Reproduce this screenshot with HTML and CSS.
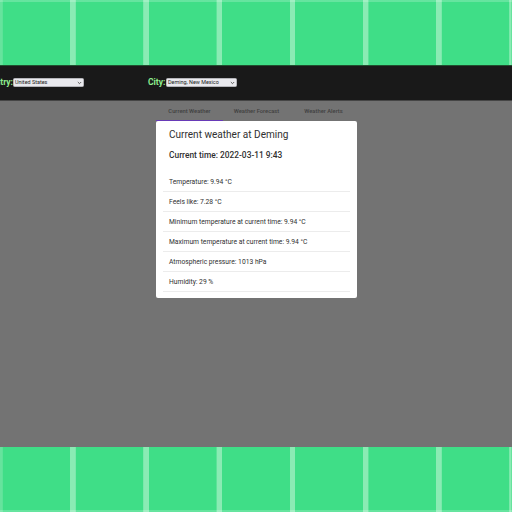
FILE: index.html
```html
<!DOCTYPE html>
<html lang="en">
<head>
<meta charset="utf-8">
<title>Weather</title>
<link rel="stylesheet" href="styles.css">
</head>
<body>
<div class="tiles tiles-top"></div>
<header class="bar">
  <div class="field country"><span class="label"><span class="fit">Country:</span></span><div class="select"><span>United States</span><svg viewBox="0 0 6 4"><path d="M1 .8 3 2.8 5 .8"/></svg></div></div>
  <div class="field city"><span class="label">City:</span><div class="select"><span>Deming, New Mexico</span><svg viewBox="0 0 6 4"><path d="M1 .8 3 2.8 5 .8"/></svg></div></div>
</header>
<main class="content">
  <nav class="tabs">
    <div class="tab active">Current Weather</div>
    <div class="tab">Weather Forecast</div>
    <div class="tab">Weather Alerts</div>
  </nav>
  <section class="card">
    <h1>Current weather at Deming</h1>
    <h2>Current time: 2022-03-11 9:43</h2>
    <ul>
      <li>Temperature: 9.94 °C</li>
      <li>Feels like: 7.28 °C</li>
      <li>Minimum temperature at current time: 9.94 °C</li>
      <li>Maximum temperature at current time: 9.94 °C</li>
      <li>Atmospheric pressure: 1013 hPa</li>
      <li>Humidity: 29 %</li>
    </ul>
  </section>
</main>
<div class="tiles tiles-bottom"></div>
</body>
</html>
```
FILE: styles.css
```css
* { box-sizing: border-box; }
body {
  margin: 0;
  width: 512px;
  height: 512px;
  overflow: hidden;
  display: flex;
  flex-direction: column;
  font-family: Roboto, sans-serif;
}
.tiles {
  --edges: linear-gradient(90deg, #66e39d 2px, transparent 2px, transparent 511px, #66e39d 511px);
  --columns: repeating-linear-gradient(90deg, #8aebb4 0, #8aebb4 2.2px, #3fde87 2.7px, #3fde87 69.9px, #8aebb4 70.4px, #8aebb4 73.2px);
  flex: none;
  height: 65px;
}
.tiles-top {
  background: linear-gradient(rgba(255, 255, 255, .2) 2px, transparent 2px), var(--edges), var(--columns);
}
.tiles-bottom {
  background: linear-gradient(0deg, rgba(255, 255, 255, .2) 2px, transparent 2px), var(--edges), var(--columns);
}
.bar {
  flex: none;
  height: 36px;
  display: flex;
  background: #191919;
  border-top: 1px solid #20502f;
  border-bottom: 1px solid #454545;
}
.field {
  display: flex;
  align-items: center;
  height: 33px;
}
.country { width: 148px; }
.label {
  flex: none;
  font-size: 8.5px;
  font-weight: 700;
  line-height: 10px;
  margin-top: -1px;
  color: #90ee90;
  width: 18px;
}
.country .label {
  width: 13px;
  display: flex;
  justify-content: flex-end;
}
.fit { flex: none; }
.select {
  width: 71px;
  height: 9px;
  display: flex;
  align-items: center;
  justify-content: space-between;
  padding: 0 1.5px 0 1px;
  background: #e9e9ed;
  border: 1px solid #b5b5ba;
  border-radius: 1.5px;
  font-size: 5.45px;
  line-height: 7px;
  color: #222;
}
.select svg {
  width: 5px;
  height: 4px;
  fill: none;
  stroke: #333;
  stroke-width: .9;
}
.content {
  flex: 1;
  background: #737373;
}
.tabs {
  width: 201px;
  height: 20px;
  margin-left: 156px;
  display: flex;
}
.tab {
  width: 67px;
  text-align: center;
  font-size: 5.8px;
  font-weight: 500;
  line-height: 20px;
  color: #414141;
}
.active { border-bottom: 1px solid #673ab7; }
.card {
  width: 201px;
  height: 177px;
  margin-left: 156px;
  padding: 7px 7px 0 7px;
  background: #fff;
  border-radius: 2px;
  color: #303030;
}
h1, h2 { margin: 0 0 0 6px; white-space: nowrap; }
h1 { font-size: 10.05px; line-height: 14px; font-weight: 400; }
h2 { font-size: 8.4px; line-height: 12px; font-weight: 500; margin-top: 7px; }
ul { margin: 11px 0 0; padding: 0; list-style: none; }
li {
  height: 20.08px;
  padding-left: 6px;
  line-height: 20px;
  font-size: 6.72px;
  border-bottom: 1px solid #ececec;
  white-space: nowrap;
}
```
